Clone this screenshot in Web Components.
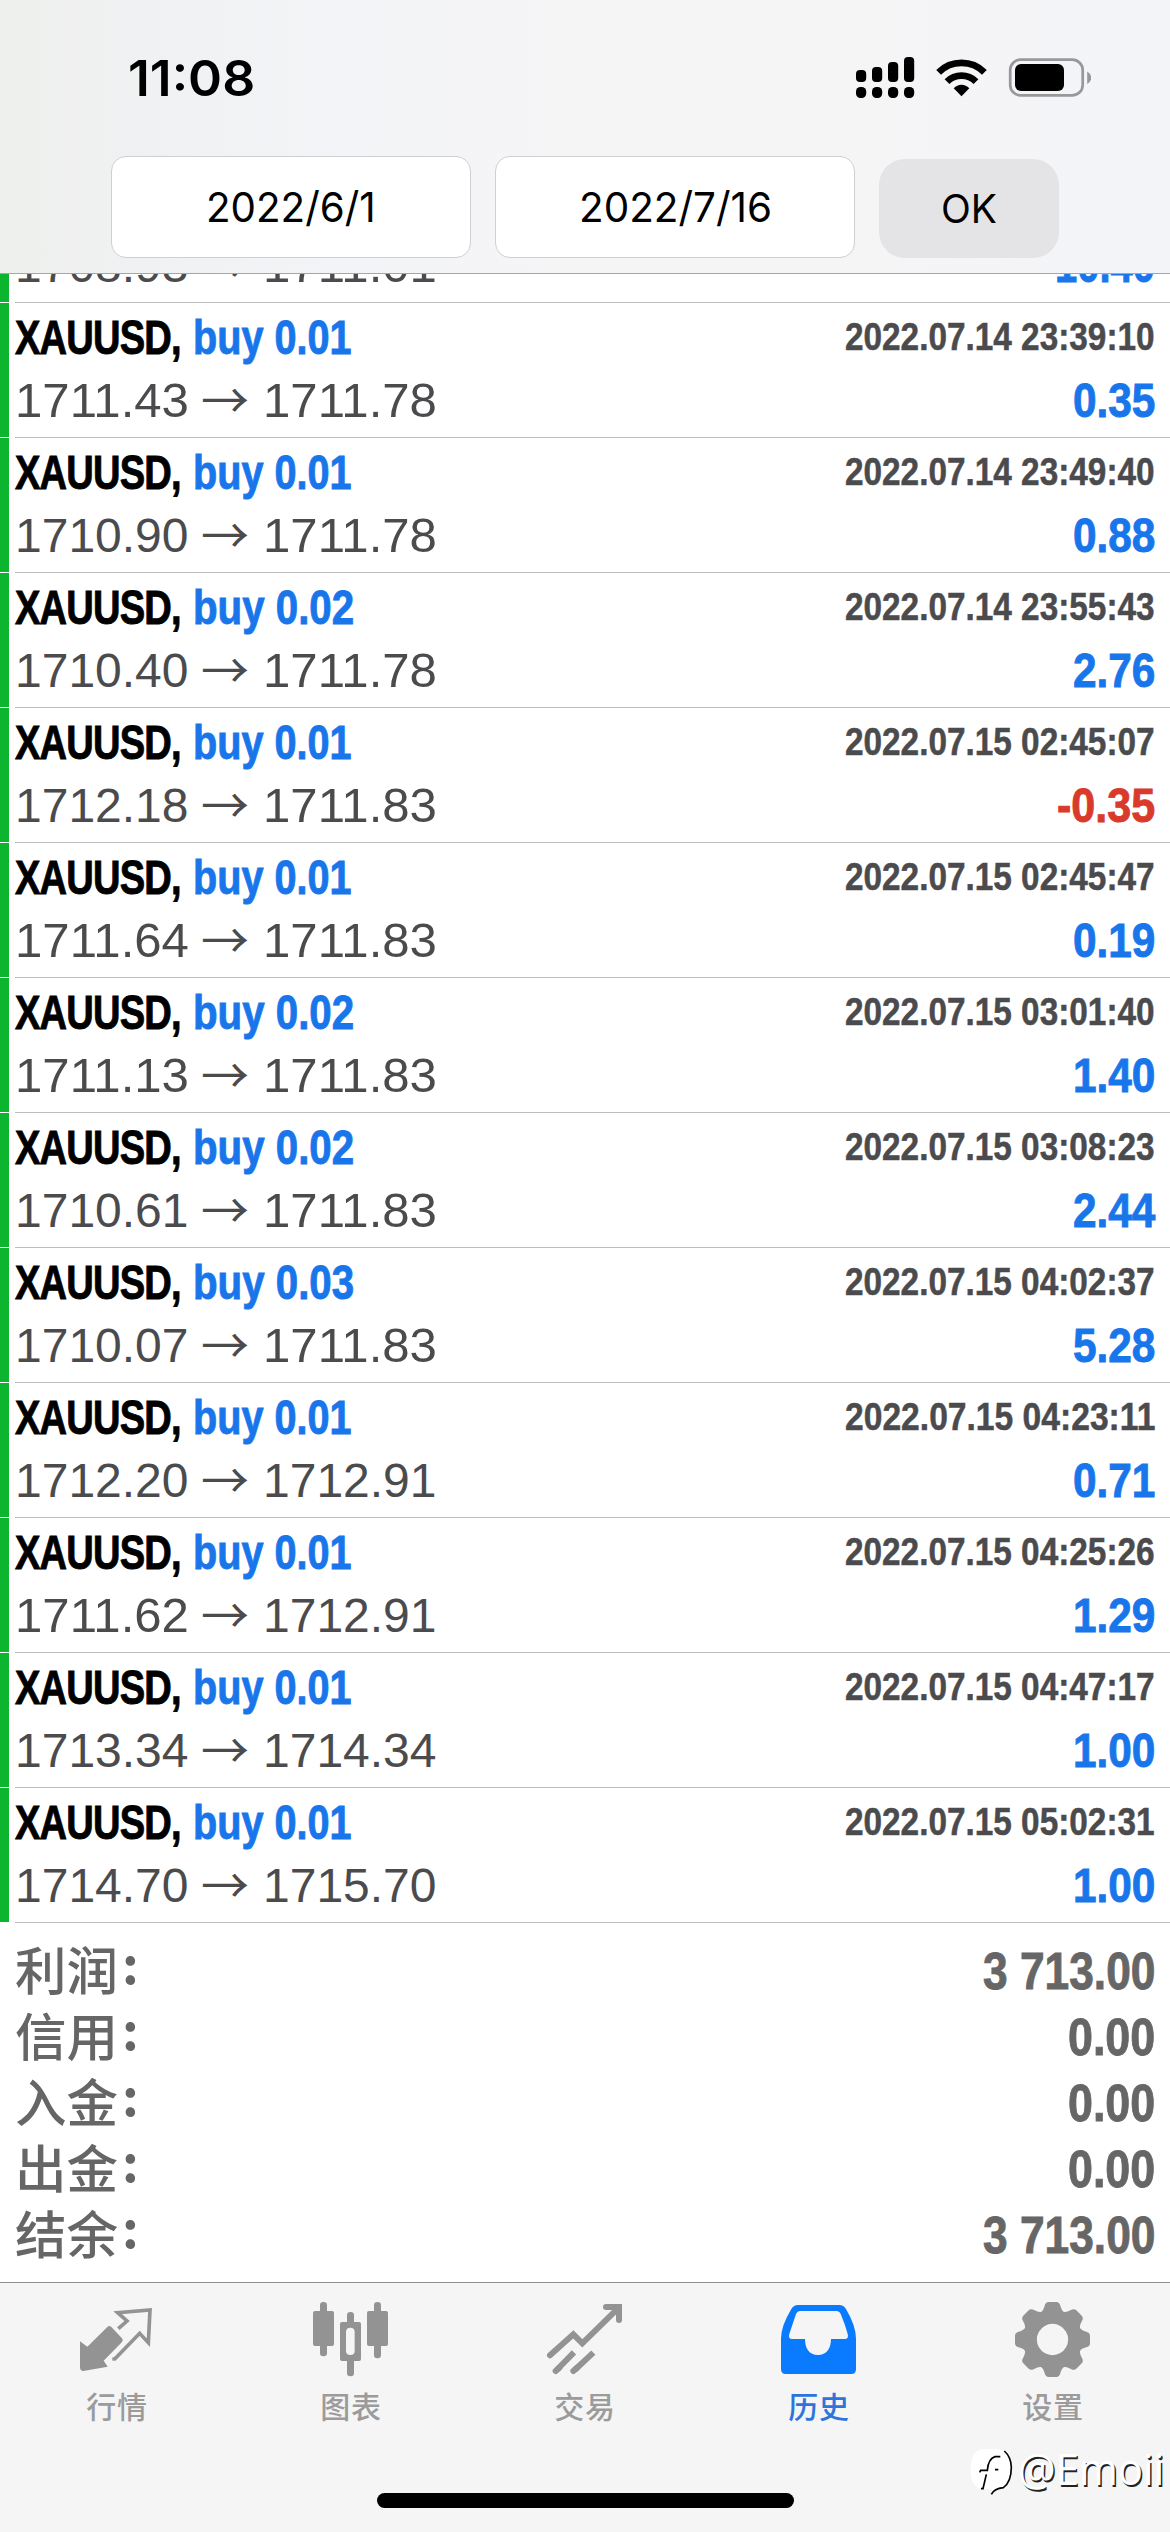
<!DOCTYPE html>
<html lang="zh-CN">
<head>
<meta charset="utf-8">
<title>历史</title>
<style>
html,body{margin:0;padding:0;background:#fff}
body{width:1170px;height:2532px;overflow:hidden;font-family:Inter,"Liberation Sans","Noto Sans CJK SC",sans-serif}
</style>
</head>
<body>
<history-app></history-app>
<script>
function define(name, html, setup) {
  customElements.define(name, class extends HTMLElement {
    connectedCallback() {
      if (this.shadowRoot) return;
      const t = document.createElement('template');
      t.innerHTML = (typeof html === 'function' ? html(this) : html).trim();
      this.attachShadow({mode: 'open'}).append(t.content.cloneNode(true));
      if (setup) setup(this);
    }
  });
}

/* Text squeezed or stretched horizontally to a given advance width (w). */
define('fit-text', `
<style>
:host{display:block;flex:none}
span{display:block;width:max-content;white-space:pre;transform-origin:0 50%}
</style><span><slot></slot></span>`, el => {
  const s = el.shadowRoot.querySelector('span');
  const w = +el.getAttribute('w');
  const natural = s.offsetWidth;
  el.style.width = w + 'px';
  s.style.transform = `scaleX(${w / natural})`;
});

define('status-bar', `
<style>
:host{display:flex;height:156px;box-sizing:border-box;padding:54px 79px 0 128px;justify-content:space-between;align-items:flex-start}
fit-text{font:600 50px/48px Inter,sans-serif;color:#000}
svg{display:block}
</style>
<fit-text w="127">11:08</fit-text>
<svg width="236" height="44" viewBox="855 54 236 44">
  <g fill="#000">
    <rect x="856" y="70" width="10.2" height="12" rx="4"/><rect x="872" y="67" width="10.2" height="15" rx="4"/>
    <rect x="888" y="62" width="10.2" height="20" rx="4"/><rect x="904" y="57" width="10.2" height="25" rx="4"/>
    <rect x="856" y="87" width="10.2" height="11" rx="4.5"/><rect x="872" y="87" width="10.2" height="11" rx="4.5"/>
    <rect x="888" y="87" width="10.2" height="11" rx="4.5"/><rect x="904" y="87" width="10.2" height="11" rx="4.5"/>
    <path d="M961.5 96.200L953.700 88.300Q957 84.700 961.500 84.700T969.300 88.300Z"/>
  </g>
  <g fill="none" stroke="#000" stroke-width="6.800">
    <path d="M938.600 72.300A32.600 32.600 0 0 1 984.400 72.300"/>
    <path d="M947 81.600A20.600 20.600 0 0 1 976 81.600"/>
  </g>
  <rect x="1010.200" y="59.600" width="72.500" height="35.800" rx="10.500" fill="none" stroke="#98989a" stroke-width="2.700"/>
  <rect x="1015" y="64" width="49" height="27" rx="6" fill="#000"/>
  <path d="M1087.200 71.500q4 2 4 6.200t-4 6.200z" fill="#98989a"/>
</svg>`);

define('date-field', el => `
<style>
:host{display:flex;width:360px;height:102px;box-sizing:border-box;border:1.500px solid #cfcfd1;border-radius:15px;background:#fff;align-items:center;justify-content:center;color:#000}
fit-text{font:400 41.500px/50px Inter,sans-serif}
</style><fit-text w="${el.getAttribute('w')}"><slot></slot></fit-text>`);

define('ok-button', `
<style>
:host{display:flex;width:180px;height:99px;margin:3px 0 0 0;border-radius:26px;background:#e4e4e6;align-items:center;justify-content:center;color:#000}
fit-text{font:400 39px/48px Inter,sans-serif}
</style><fit-text w="56"><slot></slot></fit-text>`);

define('top-bar', `
<style>
:host{display:block;height:274px;box-sizing:border-box;border-bottom:1px solid #a6a6a8;background:linear-gradient(90deg,#eef0ed 0,#f0f1f2 12%,#f3f4f7 30%,#f5f5f6 48%,#f5f5f6 75%,#f3f4f8 100%)}
.row{display:flex;padding-left:111px;gap:24px}
</style>
<status-bar></status-bar>
<div class="row"><date-field w="170">2022/6/1</date-field><date-field w="193">2022/7/16</date-field><ok-button>OK</ok-button></div>`);

define('deal-row', el => {
  const a = n => el.getAttribute(n);
  const p = a('profit');
  const wide = p.length === 5;
  const head = a('time') ? `<div class="l"><fit-text class="sym" w="175.500">XAUUSD, </fit-text><fit-text class="vol" w="${a('vol') === '0.01' ? 158.5 : 161}">buy ${a('vol')}</fit-text></div><fit-text class="time" w="310">${a('time')}</fit-text>` : '';
  return `
<style>
:host{display:flex;height:135px;flex:none;font-family:"Liberation Sans",sans-serif;color:#4b4b4e}
i{width:9px;height:134px;background:#0cb52d;margin-right:6px}
.body{flex:1;border-bottom:1px solid #bcbcbe;box-sizing:border-box;height:135px;padding:9px 15px 0 0}
.line{display:flex;justify-content:space-between;align-items:flex-start;height:52px}
.line + .line{margin-top:11px}
.l{display:flex;align-items:flex-start}
.sym,.vol,.pr{font-weight:700;font-size:47.500px;line-height:52px;-webkit-text-stroke:.9px currentColor}
.sym{color:#000;letter-spacing:-1px}.vol,.pr{color:#1976ea}
.vol{margin-left:2px}
.pr.neg{color:#d93a2b}
.time{font-weight:700;font-size:38.500px;line-height:49px;-webkit-text-stroke:.5px currentColor}
.num{font-size:48px;line-height:52px}
.arr{font-family:"Noto Sans CJK SC",sans-serif;font-size:48px;line-height:44px;margin:0 14px 0 12px}
</style>
<i></i><div class="body">
<div class="line">${head}</div>
<div class="line"><div class="l"><fit-text class="num" w="174">${a('from')}</fit-text><fit-text class="arr" w="48">→</fit-text><fit-text class="num" w="174">${a('to')}</fit-text></div><fit-text class="pr ${p[0] === '-' ? 'neg' : ''}" w="${wide ? (p[0] === '-' ? 98 : 100) : 82}">${p}</fit-text></div>
</div>`;
});

/* The first deal is scrolled under the top bar: only its price line shows. */
const deals = [
  ['', '', '1708.93', '1711.01', '10.40'],
  ['0.01', '2022.07.14 23:39:10', '1711.43', '1711.78', '0.35'],
  ['0.01', '2022.07.14 23:49:40', '1710.90', '1711.78', '0.88'],
  ['0.02', '2022.07.14 23:55:43', '1710.40', '1711.78', '2.76'],
  ['0.01', '2022.07.15 02:45:07', '1712.18', '1711.83', '-0.35'],
  ['0.01', '2022.07.15 02:45:47', '1711.64', '1711.83', '0.19'],
  ['0.02', '2022.07.15 03:01:40', '1711.13', '1711.83', '1.40'],
  ['0.02', '2022.07.15 03:08:23', '1710.61', '1711.83', '2.44'],
  ['0.03', '2022.07.15 04:02:37', '1710.07', '1711.83', '5.28'],
  ['0.01', '2022.07.15 04:23:11', '1712.20', '1712.91', '0.71'],
  ['0.01', '2022.07.15 04:25:26', '1711.62', '1712.91', '1.29'],
  ['0.01', '2022.07.15 04:47:17', '1713.34', '1714.34', '1.00'],
  ['0.01', '2022.07.15 05:02:31', '1714.70', '1715.70', '1.00']
];

define('deal-list', () => `
<style>:host{display:flex;flex-direction:column;justify-content:flex-end;height:1649px;overflow:hidden;background:#fff}</style>
${deals.map(d => `<deal-row vol="${d[0]}" time="${d[1]}" from="${d[2]}" to="${d[3]}" profit="${d[4]}"></deal-row>`).join('')}`);

define('summary-row', el => `
<style>
:host{display:flex;height:66px;align-items:flex-start;justify-content:space-between;padding:0 15px;color:#666}
.k{font:500 51.500px/60px "Noto Sans CJK SC",sans-serif;display:flex}
.k b{font-weight:700;margin-left:4px;margin-top:-6px}
fit-text{font:700 51.500px/66px "Liberation Sans",sans-serif;-webkit-text-stroke:.9px currentColor}
</style>
<div class="k"><slot></slot><b>:</b></div><fit-text w="${el.getAttribute('v').length > 4 ? 172 : 87}">${el.getAttribute('v')}</fit-text>`);

define('account-summary', `
<style>:host{display:block;height:359px;box-sizing:border-box;padding-top:15px;background:#fff}</style>
<summary-row v="3 713.00">利润</summary-row><summary-row v="0.00">信用</summary-row><summary-row v="0.00">入金</summary-row><summary-row v="0.00">出金</summary-row><summary-row v="3 713.00">结余</summary-row>`);

const icons = {
  quotes: ['231 90 240 240', `<path fill="currentColor" d="M240 214L262 230L322 171Q328 165 334 171L366 205Q371 211 366 216L311 272L323 290L250 303Q240 303 240 292Z"/>
    <path fill="none" stroke="currentColor" stroke-width="11" d="M355 176L381 153L353 128L450 120L445 218L419 190L345 266"/><path stroke="currentColor" stroke-width="10" d="M337 267h11"/>`],
  chart: ['933 90 240 240', `<g fill="currentColor"><rect x="960" y="96" width="21" height="163" rx="10"/><rect x="939" y="123" width="63" height="105" rx="6"/>
    <rect x="1122" y="96" width="21" height="169" rx="10"/><rect x="1101" y="123" width="63" height="105" rx="6"/>
    <rect x="1041" y="126" width="21" height="40" rx="10"/><rect x="1041" y="262" width="21" height="57" rx="10"/></g>
    <path fill="currentColor" fill-rule="evenodd" d="M1026 156h51q6 0 6 6v105q0 6-6 6h-51q-6 0-6-6v-105q0-6 6-6zM1051 173q-13 0-13 13v56q0 13 13 13t13-13v-56q0-13-13-13z"/>`],
  trade: ['255 90 240 240', `<g fill="none" stroke="currentColor" stroke-width="18"><path stroke-linecap="round" d="M270 256L340 193L367 220L474 115M438 111H477V150"/>
    <path stroke-linecap="round" d="M287 303L298 293M340 303L351 293"/><path d="M290 300L342 247M344 300L400 248"/></g>`],
  history: ['957 90 240 240', `<path fill="currentColor" fill-rule="evenodd" d="M1014 105H1138Q1151 105 1158 117Q1188 168 1188 206V298Q1188 312 1174 312H977Q963 312 963 298V206Q963 168 994 117Q1001 105 1014 105ZM1021 123Q1012 123 1008 132L988 192Q984 207 996 207H1035C1035 235 1048 255 1074 255S1113 235 1113 207H1154Q1167 207 1163 192Q1156 165 1143 134Q1139 123 1129 123Z"/>`],
  settings: ['459 90 240 240', `<g fill="currentColor">${[0,45,90,135,180,225,270,315].map(r => `<path transform="rotate(${r} 577.500 208.500)" d="M530 150L543 126Q550 122 554 107Q557 96 566 96H589Q598 96 601 107Q605 122 612 126L625 150Z"/>`).join('')}
    <path fill-rule="evenodd" d="M577.500 121a87.500 87.500 0 1 0 .01 0zM577.500 161.500a47 47 0 1 1 -.01 0z"/></g>`]
};
define('tab-item', el => {
  const [vb, body] = icons[el.getAttribute('icon')];
  return `
<style>
:host{display:flex;flex-direction:column;align-items:center;flex:1;padding-top:17px;color:#939393}
:host([active]){color:#0a7aff}
svg{display:block;width:80px;height:80px}
span{font:500 30px/36px "Noto Sans CJK SC",sans-serif;letter-spacing:.8px;margin-top:7px;color:#9b9b9b}
:host([active]) span{color:#2d74dd}
</style>
<svg viewBox="${vb}">${body}</svg><span><slot></slot></span>`;
});

define('water-mark', `
<style>
:host{position:absolute;right:6px;bottom:34px;display:flex;align-items:flex-start;gap:4px}
fit-text{font:400 44px/50px "Open Sans",sans-serif;color:#fff;text-shadow:1.500px 1.500px 0 #222}
svg{display:block;margin-top:5px}
</style>
<svg width="44" height="50" viewBox="325 533 132 150"><path fill="#fff" d="M360 537H410Q450 542 450 600Q446 650 420 655Q400 660 388 672L392 655H360Q327 650 327 600Q327 542 360 537Z"/>
<g fill="none" stroke="#000" stroke-width="5"><path d="M428 542Q448 560 449 590Q449 635 425 652Q398 655 389 672"/><path d="M354 606L357 600H377Q380 565 400 559H416M400 598H410M374 612L364 655H358"/></g></svg>
<fit-text w="146">@Emoii</fit-text>`);

define('tab-bar', `
<style>
:host{display:block;position:relative;height:250px;box-sizing:border-box;border-top:1px solid #8e8e90;background:#f5f5f5}
nav{display:flex;height:210px}
.home{width:417px;height:15px;border-radius:8px;background:#000;margin:0 auto}
</style>
<nav><tab-item icon="quotes">行情</tab-item><tab-item icon="chart">图表</tab-item><tab-item icon="trade">交易</tab-item><tab-item icon="history" active>历史</tab-item><tab-item icon="settings">设置</tab-item></nav>
<div class="home"></div><water-mark></water-mark>`);

define('history-app', `
<style>:host{display:flex;flex-direction:column;width:1170px;height:2532px;overflow:hidden;background:#fff}</style>
<top-bar></top-bar><deal-list></deal-list><account-summary></account-summary><tab-bar></tab-bar>`);
</script>
</body>
</html>
